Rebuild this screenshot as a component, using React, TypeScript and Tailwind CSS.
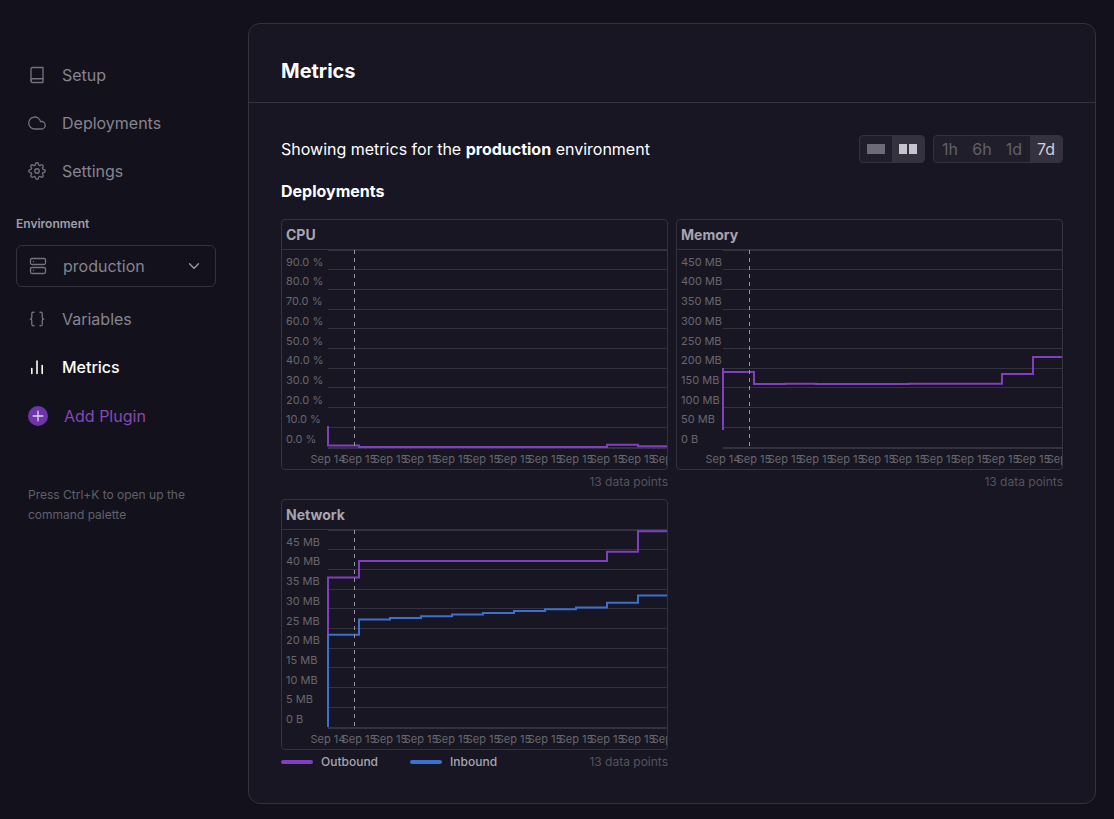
import type { ReactNode } from "react";
import { FiBook, FiChevronDown, FiCloud, FiServer, FiSettings } from "react-icons/fi";
import { Braces } from "lucide-react";

type Series = { path: string; className: string };

type ChartProps = {
  title: string;
  ticks: string[];
  series: Series[];
  legend?: ReactNode;
};

const GRID_Y = [19, 39, 59, 78, 98, 118, 137, 157, 177];
const LABEL_Y = [16, 35, 55, 75, 95, 114, 134, 154, 173, 193];
const DATES = ["Sep 14", ...Array<string>(11).fill("Sep 15")];

const CPU_TICKS = ["90.0 %", "80.0 %", "70.0 %", "60.0 %", "50.0 %", "40.0 %", "30.0 %", "20.0 %", "10.0 %", "0.0 %"];
const MEMORY_TICKS = ["450 MB", "400 MB", "350 MB", "300 MB", "250 MB", "200 MB", "150 MB", "100 MB", "50 MB", "0 B"];
const NETWORK_TICKS = ["45 MB", "40 MB", "35 MB", "30 MB", "25 MB", "20 MB", "15 MB", "10 MB", "5 MB", "0 B"];

const PURPLE = "stroke-[#7f3fbf]";
const BLUE = "stroke-[#3b70d0]";

function Chart({ title, ticks, series, legend }: ChartProps) {
  return (
    <section>
      <div className="overflow-hidden rounded border border-[#33323e]">
        <h3 className="h-[30px] border-b border-[#33323e] px-1 text-sm leading-[29px] font-bold text-[#a7a5b0]">
          {title}
        </h3>
        <svg viewBox="0 0 385 219" className="block h-auto w-full" role="img" aria-label={`${title} chart`}>
          <g className="fill-[#33323e]">
            <rect x="46" y="0" width="339" height="1" />
            {GRID_Y.map((y) => (
              <rect key={y} x="46" y={y} width="339" height="1" />
            ))}
            <rect x="46" y="197" width="339" height="2" />
          </g>
          <g className="fill-[#68666f] text-[11px]">
            {ticks.map((tick, i) => (
              <text key={tick} x="4" y={LABEL_Y[i]}>
                {tick}
              </text>
            ))}
            {DATES.map((date, i) => (
              <text key={i} x={46 + i * 31} y="213" textAnchor="middle">
                {date}
              </text>
            ))}
          </g>
          {series.map((s) => (
            <path key={s.path} d={s.path} fill="none" strokeWidth="2" className={s.className} />
          ))}
          <path d="M72.5 0V197" fill="none" strokeWidth="1" strokeDasharray="4 4" className="stroke-[#94929c]" />
        </svg>
      </div>
      <div className="flex h-6 items-center gap-8 text-xs font-medium text-[#a7a5b0]">
        {legend}
        <span className="ml-auto font-normal text-[#55535e]">13 data points</span>
      </div>
    </section>
  );
}

function NavItem({ icon, children, active = false }: { icon: ReactNode; children: ReactNode; active?: boolean }) {
  return (
    <a
      href="#"
      className={
        active
          ? "flex h-12 items-center gap-[15px] pl-[11px] font-medium text-white"
          : "flex h-12 items-center gap-[15px] pl-[11px] text-[#868490]"
      }
    >
      <span className="flex w-5 justify-center">{icon}</span>
      {children}
    </a>
  );
}

const ICON = "size-[18px] text-[#74727e]";

export default function App() {
  return (
    <div className="flex min-h-screen bg-[#13111c] font-['Inter',sans-serif] text-base text-white">
      <aside className="w-[248px] shrink-0 px-4 pt-[51px]">
        <nav>
          <NavItem icon={<FiBook className={ICON} strokeWidth={1.75} />}>Setup</NavItem>
          <NavItem icon={<FiCloud className={ICON} strokeWidth={1.75} />}>Deployments</NavItem>
          <NavItem icon={<FiSettings className={ICON} strokeWidth={1.75} />}>Settings</NavItem>
        </nav>
        <label htmlFor="environment" className="mt-[21px] block text-xs font-semibold text-[#a09eaa]">
          Environment
        </label>
        <div className="mt-[13px] grid w-[200px] items-center">
          <select
            id="environment"
            className="col-start-1 row-start-1 h-[42px] w-full appearance-none rounded-md border border-[#33323e] bg-transparent pr-10 pl-[46px] text-[#868490]"
          >
            <option>production</option>
          </select>
          <FiServer
            className="pointer-events-none col-start-1 row-start-1 ml-[13px] size-[18px] text-[#74727e]"
            strokeWidth={1.75}
          />
          <FiChevronDown
            className="pointer-events-none col-start-1 row-start-1 mr-[13px] size-[18px] justify-self-end text-[#a09eaa]"
            strokeWidth={1.75}
          />
        </div>
        <nav className="mt-2">
          <NavItem icon={<Braces className={ICON} strokeWidth={1.75} />}>Variables</NavItem>
          <NavItem
            active
            icon={
              <svg viewBox="0 0 20 20" className="size-5" fill="none" stroke="currentColor" strokeWidth="1.6" strokeLinecap="round">
                <path d="M4.8 11.5V16.5M10 4V16.5M15.2 8.5V16.5" />
              </svg>
            }
          >
            Metrics
          </NavItem>
        </nav>
        <button type="button" className="flex h-[50px] items-center gap-4 pl-3 text-[#8549b5]">
          <svg viewBox="0 0 20 20" className="size-5" aria-hidden="true">
            <circle cx="10" cy="10" r="10" className="fill-[#6e34aa]" />
            <path d="M10 5.2V14.8M5.2 10H14.8" className="stroke-[#e0d2ee]" strokeWidth="1.4" strokeLinecap="round" />
          </svg>
          Add Plugin
        </button>
        <p className="mt-11 w-[180px] pl-3 text-xs leading-5 text-[#62606b]">
          Press Ctrl+K to open up the command palette
        </p>
      </aside>

      <main className="mt-[23px] mr-[18px] mb-[15px] min-w-0 flex-1 rounded-xl border border-[#33323e] bg-[#181622]">
        <header className="border-b border-[#33323e] px-8 pt-[33px] pb-[17px]">
          <h1 className="text-xl leading-7 font-bold">Metrics</h1>
        </header>
        <div className="px-8 pt-8 pb-[29px]">
          <div className="flex items-center gap-2">
            <p className="flex-1">
              Showing metrics for the <strong className="font-bold">production</strong> environment
            </p>
            <div className="flex h-7 overflow-hidden rounded-sm border border-[#33323e] bg-[#201e2b]">
              <button type="button" aria-label="One column" className="flex w-8 items-center justify-center">
                <span className="h-[10px] w-[18px] bg-[#6d6b77]" />
              </button>
              <button
                type="button"
                aria-label="Two columns"
                aria-pressed="true"
                className="flex w-8 items-center justify-center gap-[2px] bg-[#33323e]"
              >
                <span className="h-[10px] w-2 bg-[#c6c4ce]" />
                <span className="h-[10px] w-2 bg-[#c6c4ce]" />
              </button>
            </div>
            <div className="flex h-7 overflow-hidden rounded-sm border border-[#33323e] bg-[#201e2b] text-[#62606b]">
              <button type="button" className="w-8">1h</button>
              <button type="button" className="w-8">6h</button>
              <button type="button" className="w-8">1d</button>
              <button type="button" aria-pressed="true" className="w-8 bg-[#33323e] text-[#d0ced8]">7d</button>
            </div>
          </div>
          <h2 className="mt-4 leading-6 font-bold">Deployments</h2>
          <div className="mt-4 grid grid-cols-2 gap-x-2 gap-y-[5px]">
            <Chart
              title="CPU"
              ticks={CPU_TICKS}
              series={[{ path: "M46 176V195.5H77V197H325V194.7H356V196.3H386", className: PURPLE }]}
            />
            <Chart
              title="Memory"
              ticks={MEMORY_TICKS}
              series={[
                { path: "M46 180V118M46 122H77V134H108V133.7H139V134H232V133.7H325V124H356V107H386", className: PURPLE },
              ]}
            />
            <Chart
              title="Network"
              ticks={NETWORK_TICKS}
              series={[
                { path: "M46 197V47.5H77V31H325V21.7H356V1.3H386", className: PURPLE },
                {
                  path: "M46 197V104.7H77V89.5H108V88H139V86.3H170V84.5H201V83H232V81H263V79.3H294V77.5H325V72.7H356V65.5H386",
                  className: BLUE,
                },
              ]}
              legend={
                <>
                  <span className="flex items-center gap-2">
                    <span className="h-1 w-8 rounded-full bg-[#7f3fbf]" />
                    Outbound
                  </span>
                  <span className="flex items-center gap-2">
                    <span className="h-1 w-8 rounded-full bg-[#3b70d0]" />
                    Inbound
                  </span>
                </>
              }
            />
          </div>
        </div>
      </main>
    </div>
  );
}
